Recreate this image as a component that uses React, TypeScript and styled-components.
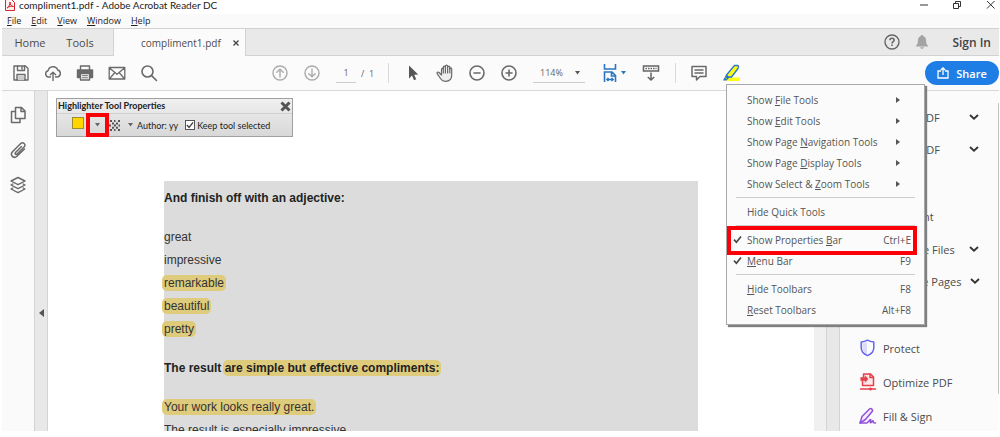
import React from "react";
import styled, { createGlobalStyle, css } from "styled-components";

const ui = `"Open Sans", "Noto Sans", sans-serif`;
const compact = `Lato, "Open Sans", sans-serif`;

const Global = createGlobalStyle`
  *, *::before, *::after { box-sizing: border-box; }
  body { margin: 0; background: #fff; font-family: ${ui}; color: #4b4b4b; }
  button, input, select { font: inherit; color: inherit; }
  ul { list-style: none; margin: 0; padding: 0; }
  svg { display: block; }
`;

const Shell = styled.div`
  height: 100vh;
  padding: 0 1px 6px 2px;
  display: flex;
  flex-direction: column;
  overflow: hidden;
`;

const plainButton = css`
  border: 0;
  padding: 0;
  margin: 0;
  background: transparent;
  display: flex;
  align-items: center;
  justify-content: center;
`;

/* Title bar */
const TitleBar = styled.header`
  height: 14px;
  flex: none;
  display: flex;
  align-items: flex-start;
  padding-left: 3px;
  gap: 4px;
  font-family: ${compact};
  font-size: 10px;
  line-height: 11px;
  color: #222;
`;

const Title = styled.span`
  flex: 1;
  white-space: nowrap;
`;

const WindowControls = styled.div`
  display: flex;
  gap: 21px;
  padding-right: 3px;
`;

const WindowButton = styled.button`
  ${plainButton}
  width: 12px;
  height: 10px;
`;

const MenuBar = styled.nav`
  height: 14px;
  flex: none;
  display: flex;
  gap: 10px;
  padding-left: 5px;
  background: #fafafa;
  font-size: 9px;
  line-height: 14px;
  color: #222;
`;

const MenuBarButton = styled.button`
  ${plainButton}
`;

/* Tabs */
const TabBar = styled.div`
  height: 28px;
  flex: none;
  display: flex;
  align-items: stretch;
  background: #e9e9e9;
  border-top: 1px solid #d2d2d2;
  border-bottom: 1px solid #d2d2d2;
  font-size: 11px;
  color: #4b4b4b;
`;

const NavTab = styled.button<{ $width: number }>`
  ${plainButton}
  width: ${(p) => p.$width}px;
`;

const NavTabs = styled.div`
  display: flex;
  padding: 0 5px 0 6px;
`;

const DocumentTab = styled.div`
  display: flex;
  align-items: center;
  width: 133px;
  margin-bottom: -1px;
  padding-left: 27px;
  background: #fbfbfb;
  border: 1px solid #d2d2d2;
  border-width: 0 1px;
  font-size: 10px;
`;

const CloseTab = styled.button`
  ${plainButton}
  margin-left: auto;
  width: 18px;
  height: 18px;
`;

const Account = styled.div`
  margin-left: auto;
  display: flex;
  align-items: center;
  padding-right: 8px;
  gap: 15px;
`;

const AccountButton = styled.button`
  ${plainButton}
`;

const SignIn = styled.a`
  margin-left: 8px;
  color: #444;
  font-weight: 600;
  font-size: 12px;
  text-decoration: none;
`;

/* Toolbar */
const Toolbar = styled.div`
  height: 35px;
  flex: none;
  display: flex;
  align-items: center;
  padding-left: 3px;
  background: #fbfbfb;
  border-bottom: 1px solid #d8d8d8;
  font-size: 9px;
  color: #666;
`;

const ToolGroup = styled.div<{ $before?: number }>`
  display: flex;
  align-items: center;
  margin-left: ${(p) => p.$before ?? 0}px;
`;

const ToolButton = styled.button<{ $faint?: boolean }>`
  ${plainButton}
  width: 32px;
  height: 24px;
  color: ${(p) => (p.$faint ? "#ababab" : "#6a6a6a")};
`;

const ToolRule = styled.span`
  width: 1px;
  height: 20px;
  background: #d8d8d8;
`;

const PageInput = styled.input`
  width: 20px;
  height: 20px;
  margin: 0 5px 0 8px;
  padding: 0;
  border: 0;
  border-bottom: 1px solid #ccc;
  background: transparent;
  text-align: center;
`;

const PageTotal = styled.span`
  width: 27px;
  white-space: nowrap;
`;

const ZoomField = styled.div`
  position: relative;
  margin: 0 15px 0 8px;
  width: 52px;
  height: 20px;
  border-bottom: 1px solid #ccc;
  display: flex;
  align-items: center;
  > svg { position: absolute; right: 5px; top: 8px; pointer-events: none; }
`;

const ZoomSelect = styled.select`
  appearance: none;
  border: 0;
  background: transparent;
  width: 100%;
  height: 19px;
  padding: 0 12px 0 7px;
`;

const FitButton = styled.button`
  ${plainButton}
  gap: 4px;
  width: 28px;
  height: 24px;
  margin-right: 7px;
`;

const ShareButton = styled.button`
  ${plainButton}
  margin-left: auto;
  width: 74px;
  height: 24px;
  gap: 7px;
  border-radius: 12px;
  background: #1f7ee6;
  color: #fff;
  font-size: 11px;
  font-weight: 600;
`;

const MenuAnchor = styled.div`
  position: relative;
`;

/* Drop-down menu */
const Menu = styled.ul`
  position: absolute;
  z-index: 5;
  top: 23px;
  left: 11px;
  width: 199px;
  padding: 4px 0;
  background: #fbfbfb;
  border: 1px solid #a8a8a8;
  box-shadow: 2px 2px 1px #808080;
  font-size: 10px;
  color: #555;
`;

const MenuRow = styled.li<{ $marked?: boolean }>`
  position: relative;
  ${(p) =>
    p.$marked &&
    css`
      &::after {
        content: "";
        position: absolute;
        inset: -3px 7px -5px 0;
        border: 4px solid #fb0007;
        pointer-events: none;
      }
    `}
`;

const MenuButton = styled.button`
  ${plainButton}
  width: 100%;
  height: 21px;
  display: grid;
  grid-template-columns: 20px 1fr auto;
  justify-items: start;
  padding-right: 13px;
  white-space: nowrap;
  > svg { justify-self: center; }
`;

const SubmenuMark = styled.span`
  margin-right: 11px;
  border: solid transparent;
  border-width: 3px 0 3px 4px;
  border-left-color: #555;
`;

const MenuRule = styled.li`
  height: 1px;
  margin: 3px 9px;
  background: #ccc;
`;

/* Workspace */
const Workspace = styled.div`
  flex: 1;
  min-height: 0;
  display: flex;
`;

const Rail = styled.nav`
  width: 32px;
  flex: none;
  display: flex;
  flex-direction: column;
  align-items: center;
  padding-top: 15px;
  gap: 17px;
  background: #fafafa;
  color: #6a6a6a;
`;

const RailButton = styled.button`
  ${plainButton}
  width: 18px;
  height: 18px;
`;

const Splitter = styled.div`
  width: 14px;
  flex: none;
  display: flex;
  align-items: center;
  justify-content: center;
  padding-top: 104px;
  background: #e8e8e8;
  border: 1px solid #d4d4d4;
  border-width: 0 1px;
`;

const CollapseButton = styled.button`
  ${plainButton}
  border: solid transparent;
  border-width: 4px 5px 4px 0;
  border-right-color: #555;
`;

const DocumentArea = styled.main`
  position: relative;
  flex: 1;
  min-width: 0;
  padding: 90px 116px 0;
  overflow: hidden;
`;

const Sheet = styled.article`
  min-height: 100%;
  padding-top: 6px;
  background: #dcdcdc;
  font: 12px/23px "Liberation Sans", Arial, sans-serif;
  color: #333;
`;

const Paragraph = styled.p`
  margin: 0 0 16px;
`;

const Heading = styled.h2`
  margin: 0 0 16px;
  font-size: 12px;
  font-weight: 700;
  line-height: 23px;
  color: #222;
`;

const Mark = styled.mark`
  margin: 0 -2px;
  padding: 1px 2px;
  border-radius: 5px;
  background: #dfcb7c;
  color: inherit;
`;

const Scroller = styled.div`
  width: 12px;
  flex: none;
  background: #f0f0f0;
`;

/* Floating properties bar */
const Properties = styled.section`
  position: absolute;
  top: 7px;
  left: 8px;
  width: 237px;
  height: 39px;
  border: 1px solid #a0a0a0;
  background: linear-gradient(#f0f0f0, #d8d8d8);
  font-family: ${compact};
  font-size: 9px;
  color: #222;
`;

const PropertiesHead = styled.div`
  display: flex;
  justify-content: space-between;
  align-items: center;
  height: 14px;
  padding: 0 1px;
  font-weight: 700;
  line-height: 14px;
`;

const PropertiesBody = styled.div`
  display: flex;
  align-items: center;
  height: 23px;
  padding-left: 15px;
  white-space: nowrap;
  border-top: 1px solid #d0d0d0;
`;

const Swatch = styled.button`
  width: 12px;
  height: 12px;
  padding: 0;
  margin-bottom: 4px;
  border: 1px solid #a08c2c;
  background: #ffd500;
`;

const SwatchMenu = styled.button`
  ${plainButton}
  width: 23px;
  height: 24px;
  margin-left: 2px;
  border: 4px solid #fb0007;
`;

const OpacityMenu = styled.button`
  ${plainButton}
  gap: 8px;
  margin-right: 4px;
`;

const KeepLabel = styled.label`
  display: flex;
  align-items: center;
  gap: 2px;
  margin-left: 7px;
`;

const KeepBoxWrap = styled.span`
  position: relative;
  display: flex;
  > svg { position: absolute; inset: 1px; pointer-events: none; }
  > input:not(:checked) + svg { display: none; }
`;

const KeepBox = styled.input`
  appearance: none;
  width: 10px;
  height: 10px;
  margin: 0;
  border: 1px solid #555;
  background: #fff;
`;

/* Tools pane */
const ToolsPane = styled.aside`
  width: 158px;
  flex: none;
  padding-top: 10px;
  background: #fbfbfb;
  overflow: hidden;
  font-size: 11px;
  color: #4b4b4b;
`;

const PaneTrack = styled.div`
  width: 1px;
  flex: none;
  padding-top: 12px;
  &::before {
    content: "";
    display: block;
    height: 291px;
    background: #c4c4c4;
  }
`;

const PaneRow = styled.button<{ $expandable?: boolean }>`
  ${plainButton}
  width: 100%;
  height: ${(p) => (p.$expandable ? 32 : 34)}px;
  display: grid;
  grid-template-columns: 16px 1fr 12px;
  column-gap: 8px;
  justify-items: start;
  padding: 0 17px 0 19px;
  white-space: nowrap;
`;

const Caret = ({ color = "#666" }: { color?: string }) => (
  <svg width="5" height="4" viewBox="0 0 5 4">
    <path d="M0 0h5L2.500 3.500z" fill={color} />
  </svg>
);

const Check = ({ size = 9 }: { size?: number }) => (
  <svg width={size} height={size} viewBox="0 0 9 9" fill="none" stroke="#444" strokeWidth="1.600">
    <path d="M1 4.600l2.400 2.600L8 1.500" />
  </svg>
);

const Line = ({ size = 18, children, w = 1.4 }: { size?: number; w?: number; children: React.ReactNode }) => (
  <svg
    width={size}
    height={size}
    viewBox="0 0 18 18"
    fill="none"
    stroke="currentColor"
    strokeWidth={w}
    strokeLinejoin="round"
    strokeLinecap="round"
  >
    {children}
  </svg>
);

const fileTools = [
  {
    name: "Save",
    icon: (
      <Line>
        <path d="M2 2h11.500L16 4.500V16H2z" />
        <path d="M5.500 2v4.500h7V2M10 3v2M5 16v-5.500h8V16" />
        <path d="M6 12h6v4H6z" fill="#ccc" stroke="none" />
      </Line>
    ),
  },
  {
    name: "Upload",
    icon: (
      <Line>
        <path d="M6.500 13H4.700a3.200 3.200 0 0 1-.6-6.300 5 5 0 0 1 9.600-.7 3.600 3.600 0 0 1-.3 7h-1.900" />
        <path d="M9 16.500V8.500M6.300 10.800L9 8.200l2.700 2.600" />
      </Line>
    ),
  },
  {
    name: "Print",
    icon: (
      <Line>
        <path d="M4.500 5.500V2h9v3.500" />
        <path d="M1.500 6h15v7.500h-15z" fill="currentColor" />
        <path d="M4.500 9.500h9V16h-9z" fill="#fbfbfb" />
        <path d="M6.500 11.700h5M6.500 13.800h5" strokeWidth="1" />
      </Line>
    ),
  },
  {
    name: "Email",
    icon: (
      <Line w={1.3}>
        <path d="M1.200 3.500h15.600v11.500H1.200zM1.500 4L9 10.300 16.500 4M1.500 14.700l5.200-6M16.500 14.700l-5.200-6" />
      </Line>
    ),
  },
  {
    name: "Find",
    icon: (
      <Line w={1.6}>
        <circle cx="7.500" cy="7.500" r="5.500" />
        <path d="M11.600 11.600l4.900 4.900" />
      </Line>
    ),
  },
];

const menuSections: {
  before?: string;
  key?: string;
  after?: string;
  shortcut?: string;
  sub?: boolean;
  checked?: boolean;
  marked?: boolean;
}[][] = [
  [
    { before: "Show ", key: "F", after: "ile Tools", sub: true },
    { before: "Show ", key: "E", after: "dit Tools", sub: true },
    { before: "Show Page ", key: "N", after: "avigation Tools", sub: true },
    { before: "Show Page ", key: "D", after: "isplay Tools", sub: true },
    { before: "Show Select & ", key: "Z", after: "oom Tools", sub: true },
  ],
  [{ before: "Hide Quick Tools" }],
  [
    { before: "Show Properties ", key: "B", after: "ar", shortcut: "Ctrl+E", checked: true, marked: true },
    { key: "M", after: "enu Bar", shortcut: "F9", checked: true },
  ],
  [
    { key: "H", after: "ide Toolbars", shortcut: "F8" },
    { key: "R", after: "eset Toolbars", shortcut: "Alt+F8" },
  ],
];

const PaneIcon = ({ color, children }: { color: string; children: React.ReactNode }) => (
  <svg width="18" height="18" viewBox="0 0 18 18" fill="none" stroke={color} strokeWidth="1.500" strokeLinejoin="round" strokeLinecap="round">
    {children}
  </svg>
);

const page = <path d="M4 2h7l3 3v11H4z" />;

const paneTools = [
  { name: "Export PDF", open: true, icon: <PaneIcon color="#2d9d78">{page}</PaneIcon> },
  { name: "Create PDF", open: true, icon: <PaneIcon color="#d7373f">{page}</PaneIcon> },
  { name: "Edit PDF", icon: <PaneIcon color="#c038cc">{page}</PaneIcon> },
  { name: "Comment", icon: <PaneIcon color="#e68619"><path d="M2 3h14v9H9l-3 3v-3H2z" /></PaneIcon> },
  { name: "Combine Files", open: true, icon: <PaneIcon color="#6767ec">{page}</PaneIcon> },
  { name: "Organize Pages", open: true, icon: <PaneIcon color="#2d9d78">{page}</PaneIcon> },
  { name: "Redact", icon: <PaneIcon color="#d83790">{page}</PaneIcon> },
  {
    name: "Protect",
    icon: (
      <PaneIcon color="#6464ee">
        <path d="M8 3.500v12C5 14 3.500 11.500 3.500 8.500V4z" fill="#dcdcfa" stroke="none" />
        <path d="M8.500 1.200c2 1.300 4 1.700 6.300 1.800v5.800c0 3.600-2.300 6.200-6.300 7.800-4-1.600-6.300-4.200-6.300-7.800V3c2.300-.1 4.300-.5 6.300-1.800z" />
      </PaneIcon>
    ),
  },
  {
    name: "Optimize PDF",
    icon: (
      <PaneIcon color="#e5404c">
        <path d="M4.500 4V1h7L14.500 4v8.500h-11V8" fill="#fde7e8" />
        <path d="M11 1v3.500h3.500" />
        <path d="M2 4.500h4.500v3H2zM6.500 3l2.500 3-2.500 3z" fill="#e5404c" strokeWidth="0.600" />
        <path d="M1.500 16h15" />
        <circle cx="11.500" cy="16" r="1.300" fill="#e5404c" strokeWidth="0.500" />
      </PaneIcon>
    ),
  },
  {
    name: "Fill & Sign",
    icon: (
      <PaneIcon color="#9150dc">
        <path d="M1 16l2-6.500L10.500 2c1.500-1.300 4 .8 2.700 2.600L6.500 12.500z" fill="#f3eafc" />
        <path d="M1 16h7c1.500-1 2.500-3.500 3.500-3.500s-1 3 0 3.200 1.700-2 2.500-1.900-.2 1.900.7 2l1.800.2" />
      </PaneIcon>
    ),
  },
];

const barMenus = ["File", "Edit", "View", "Window", "Help"];

export default function App() {
  return (
    <Shell>
      <Global />
      <TitleBar>
        <svg width="10" height="11" viewBox="0 0 10 11" fill="none" stroke="#d9262c">
          <path d="M.5 0v10.500h9V2.500L7 0" fill="#fff1f1" />
          <path d="M2 8c2-1 3-3.500 3-6 0 3 1.500 4.500 3.500 4.500C6 5.800 4 6.500 2 8z" />
        </svg>
        <Title>compliment1.pdf - Adobe Acrobat Reader DC</Title>
        <WindowControls>
          <WindowButton aria-label="Minimize">
            <svg width="8" height="10" viewBox="0 0 8 10"><path d="M0 5h8" stroke="#333" /></svg>
          </WindowButton>
          <WindowButton aria-label="Restore">
            <svg width="10" height="10" viewBox="0 0 10 10" fill="none" stroke="#333">
              <path d="M1.500 3.500h5v5h-5zM3.500 3V1.500h5v5H7" />
            </svg>
          </WindowButton>
          <WindowButton aria-label="Close">
            <svg width="9" height="10" viewBox="0 0 9 10" stroke="#333"><path d="M1 1l7.500 7.500M8.500 1L1 8.500" /></svg>
          </WindowButton>
        </WindowControls>
      </TitleBar>

      <MenuBar aria-label="Menu bar">
        {barMenus.map((m) => (
          <MenuBarButton key={m}>
            <span><u>{m[0]}</u>{m.slice(1)}</span>
          </MenuBarButton>
        ))}
      </MenuBar>

      <TabBar>
        <NavTabs>
          <NavTab $width={44}>Home</NavTab>
          <NavTab $width={56}>Tools</NavTab>
        </NavTabs>
        <DocumentTab>
          compliment1.pdf
          <CloseTab aria-label="Close tab">
            <svg width="6" height="6" viewBox="0 0 6 6" stroke="#444" strokeWidth="1.300"><path d="M.5.5l5 5M5.500.5l-5 5" /></svg>
          </CloseTab>
        </DocumentTab>
        <Account>
          <AccountButton aria-label="Help">
            <svg width="16" height="16" viewBox="0 0 16 16" fill="none" stroke="#666" strokeWidth="1.400">
              <circle cx="8" cy="8" r="7" />
              <path d="M5.900 6.200c.1-2.700 4.300-2.600 4.200 0 0 1.500-2 1.500-2 3.200M8 10.600v1.500" strokeWidth="1.600" />
            </svg>
          </AccountButton>
          <AccountButton aria-label="Notifications">
            <svg width="14" height="16" viewBox="0 0 14 16" fill="#a4a4a4">
              <path d="M7 1c.7 0 1.100.4 1.100 1 2.100.6 3 2.300 3 4.500 0 3 .6 4 1.900 5.200v.8H1v-.8C2.300 10.500 2.900 9.500 2.900 6.500c0-2.200.9-3.900 3-4.500 0-.6.400-1 1.100-1zM5.300 13.300h3.400c-.2 2-3.200 2-3.400 0z" />
            </svg>
          </AccountButton>
          <SignIn href="#sign-in">Sign In</SignIn>
        </Account>
      </TabBar>

      <Toolbar>
        <ToolGroup>
          {fileTools.map((t) => (
            <ToolButton key={t.name} aria-label={t.name}>{t.icon}</ToolButton>
          ))}
        </ToolGroup>
        <ToolGroup $before={99}>
          <ToolButton $faint aria-label="Previous page">
            <Line><circle cx="9" cy="9" r="7" /><path d="M9 13V5.500M5.800 8.300L9 5.200l3.200 3.100" /></Line>
          </ToolButton>
          <ToolButton $faint aria-label="Next page">
            <Line><circle cx="9" cy="9" r="7" /><path d="M9 5v7.500M5.800 9.700L9 12.800l3.200-3.100" /></Line>
          </ToolButton>
          <PageInput aria-label="Page number" defaultValue="1" />
          <PageTotal>/&nbsp; 1</PageTotal>
          <ToolRule />
        </ToolGroup>
        <ToolGroup $before={8}>
          <ToolButton aria-label="Select">
            <svg width="18" height="18" viewBox="0 0 18 18" fill="#555">
              <path d="M5 1.500v13l3-2.900 2 4.600 2.200-1-2-4.400 4-.4z" />
            </svg>
          </ToolButton>
          <ToolButton aria-label="Pan">
            <Line w={1.2}>
              <path d="M5.500 11L3 8.500c-1-1-2.500.1-1.700 1.300L4.800 15c1 1.500 2.400 2.300 4.700 2.300 4 0 6.200-2.200 6.200-6V5c0-1.400-1.900-1.400-1.900 0V3.300c0-1.500-2.200-1.500-2.200 0V2.200c0-1.500-2.200-1.500-2.200 0v1.100c0-1.500-2.100-1.500-2.100 0V5c-.3-1-1.800-.9-1.800.4z" fill="#eee" />
              <path d="M7.300 4v5M9.400 3v6M11.600 3v6M13.800 4v5" />
            </Line>
          </ToolButton>
          <ToolButton aria-label="Zoom out">
            <Line w={1.6}><circle cx="9" cy="9" r="7" /><path d="M6 9h6" /></Line>
          </ToolButton>
          <ToolButton aria-label="Zoom in">
            <Line w={1.6}><circle cx="9" cy="9" r="7" /><path d="M6 9h6M9 6v6" /></Line>
          </ToolButton>
          <ZoomField>
            <ZoomSelect aria-label="Zoom level" defaultValue="114%">
              <option>114%</option>
              <option>100%</option>
            </ZoomSelect>
            <Caret color="#555" />
          </ZoomField>
          <FitButton aria-label="Fit width">
            <svg width="14" height="18" viewBox="0 0 14 18" fill="none" stroke="#2a76c4" strokeWidth="1.600">
              <path d="M1.500 0v5h11V0M1.500 18V8h7.500l3.500 3.500V18M8.500 8v4h4M4 15.500h6M5.500 14L4 15.500 5.500 17M8.500 14l1.500 1.500L8.500 17" />
            </svg>
            <Caret color="#2a76c4" />
          </FitButton>
          <ToolButton aria-label="Scrolling mode">
            <svg width="18" height="18" viewBox="0 0 18 18" fill="none" stroke="#666" strokeWidth="1.500">
              <path d="M1.500 2h15v5h-15z" />
              <path d="M3.500 4.500h11" strokeDasharray="1.500 1" />
              <path d="M9 8.500V16M5.800 13L9 16l3.200-3" />
            </svg>
          </ToolButton>
          <ToolGroup $before={8}><ToolRule /></ToolGroup>
        </ToolGroup>
        <ToolGroup $before={7}>
          <ToolButton aria-label="Comment">
            <Line w={1.5}><path d="M2 2.500h14v10H10L6.500 16v-3.500H2zM5 6h8M5 9h8" /></Line>
          </ToolButton>
          <MenuAnchor>
            <ToolButton aria-label="Highlight" aria-haspopup="menu">
              <svg width="18" height="18" viewBox="0 0 18 18">
                <path d="M6 13.500h12v3.500H4z" fill="#ffff14" />
                <path d="M12.500 1.500H16c.6.600.6 2 0 3L9.500 13H6L4.500 11z" fill="#ffff14" stroke="#2a76c4" strokeWidth="1.300" strokeLinejoin="round" />
                <path d="M4.200 10.500L7.500 13.500 4.500 16.500H1z" fill="#2a76c4" />
                <path d="M3.200 13.500l1.800 1.500" stroke="#9ccc50" />
              </svg>
            </ToolButton>
            <Menu>
              {menuSections.map((rows, i) => (
                <React.Fragment key={i}>
                  {i > 0 && <MenuRule />}
                  {rows.map((r) => (
                    <MenuRow key={(r.before ?? "") + (r.after ?? "")} $marked={r.marked}>
                      <MenuButton>
                        {r.checked ? <Check /> : <span />}
                        <span>{r.before}{r.key && <u>{r.key}</u>}{r.after}</span>
                        {r.sub ? <SubmenuMark /> : <span>{r.shortcut}</span>}
                      </MenuButton>
                    </MenuRow>
                  ))}
                </React.Fragment>
              ))}
            </Menu>
          </MenuAnchor>
        </ToolGroup>
        <ShareButton>
          <svg width="12" height="12" viewBox="0 0 12 12" fill="none" stroke="#fff" strokeWidth="1.300">
            <path d="M4 4H1v7h10V4H8M6 8V1M3.800 3L6 .9 8.200 3" />
          </svg>
          Share
        </ShareButton>
      </Toolbar>

      <Workspace>
        <Rail aria-label="Navigation panes">
          <RailButton aria-label="Page thumbnails">
            <Line w={1.5}><path d="M6.500 1.500h6l3.500 3.500v7.500H6.500zM12 1.500V5.500h4M6.500 5.500H2.500v11H11v-3.500" /></Line>
          </RailButton>
          <RailButton aria-label="Attachments">
            <Line w={1.5}>
              <path d="M12.500 5.500l-6 6c-1 1.200.6 2.500 1.600 1.500l7-7C17.500 3.500 14 .3 11.500 2.800l-8 8c-3 3.200 1.300 7.500 4.400 4.400L15.500 8" />
            </Line>
          </RailButton>
          <RailButton aria-label="Layers">
            <Line w={1.4}>
              <path d="M9 1.500l7 3.500-7 3.700L2 5zM3.800 8L2 9l7 3.700L16 9l-1.800-1M3.800 12L2 13l7 3.700 7-3.700-1.800-1" />
            </Line>
          </RailButton>
        </Rail>
        <Splitter>
          <CollapseButton aria-label="Expand navigation pane" />
        </Splitter>

        <DocumentArea>
          <Properties aria-label="Highlighter Tool Properties">
            <PropertiesHead>
              Highlighter Tool Properties
              <AccountButton aria-label="Close properties">
                <svg width="11" height="11" viewBox="0 0 11 11" stroke="#555" strokeWidth="3"><path d="M1.500 1.500l8 8M9.500 1.500l-8 8" /></svg>
              </AccountButton>
            </PropertiesHead>
            <PropertiesBody>
              <Swatch aria-label="Color" />
              <SwatchMenu aria-label="Color options"><Caret /></SwatchMenu>
              <OpacityMenu aria-label="Opacity">
                <svg width="11" height="11" viewBox="0 0 11 11" fill="#555">
                  <path d="M1 0h2v2H1zM5 0h1.500v2H5zM9 0h2v2H9zM3 2.500h2v2H3zM7 2.500h2v2H7zM0 4.500h2v2H0zM5 4.500h2v2H5zM9.500 4.500h1.500v2H9.500zM3 6.800h2v2H3zM7 6.800h2v2H7zM1 9h2v2H1zM5 9h1.500v2H5zM9 9h2v2H9z" />
                </svg>
                <Caret />
              </OpacityMenu>
              Author: yy
              <KeepLabel>
                <KeepBoxWrap>
                  <KeepBox type="checkbox" defaultChecked />
                  <Check size={8} />
                </KeepBoxWrap>
                Keep tool selected
              </KeepLabel>
            </PropertiesBody>
          </Properties>

          <Sheet>
            <Heading>And finish off with an adjective:</Heading>
            <Paragraph>
              great<br />
              impressive<br />
              <Mark>remarkable</Mark><br />
              <Mark>beautiful</Mark><br />
              <Mark>pretty</Mark>
            </Paragraph>
            <Heading>The result <Mark>are simple but effective compliments:</Mark></Heading>
            <Paragraph>
              <Mark>Your work looks really great.</Mark><br />
              The result is especially impressive.
            </Paragraph>
          </Sheet>
        </DocumentArea>

        <Scroller />
        <Splitter />
        <ToolsPane aria-label="Tools">
          {paneTools.map((t) => (
            <PaneRow key={t.name} $expandable={t.open}>
              {t.icon}
              <span>{t.name}</span>
              {t.open && (
                <svg width="10" height="6" viewBox="0 0 10 6" fill="none" stroke="#333" strokeWidth="1.800"><path d="M1 1l4 3.700L9 1" /></svg>
              )}
            </PaneRow>
          ))}
        </ToolsPane>
        <PaneTrack />
      </Workspace>
    </Shell>
  );
}
